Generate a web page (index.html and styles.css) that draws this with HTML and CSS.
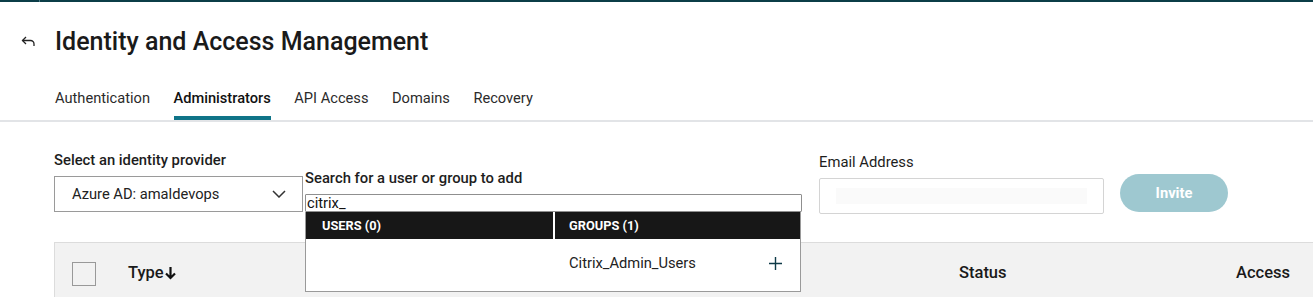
FILE: index.html
```html
<!DOCTYPE html>
<html lang="en">

<head>
    <meta charset="UTF-8">
    <meta name="viewport" content="width=device-width, initial-scale=1.0">

    <title>Identity and Access Management</title>
    <link rel="stylesheet" href="styles.css">
</head>

<body>
    <div class="topbar"></div>

    <div class="page-header">
        <svg class="back-icon" width="16" height="12" viewBox="0 0 16 12">
            <path d="M5 1 L1.5 4.5 L5 8" fill="none" stroke="#222" stroke-width="1.3" />
            <path d="M1.5 4.5 H9.5 A3.5 3.5 0 0 1 13 8 V10" fill="none" stroke="#222" stroke-width="1.3" />
        </svg>
        <h1>Identity and Access Management</h1>
    </div>

    <nav class="tabs">
        <a class="tab">Authentication</a>
        <a class="tab active">Administrators</a>
        <a class="tab">API Access</a>
        <a class="tab">Domains</a>
        <a class="tab">Recovery</a>
    </nav>

    <div class="form-row">
        <div class="field provider">
            <label>Select an identity provider</label>
            <div class="select-box">
                <span>Azure AD: amaldevops</span>
                <svg width="14" height="8" viewBox="0 0 14 8">
                    <path d="M1 1 L7 7 L13 1" fill="none" stroke="#333" stroke-width="1.5" />
                </svg>
            </div>
        </div>

        <div class="field search">
            <label>Search for a user or group to add</label>
            <div class="search-wrap">
                <input type="text" class="search-input" value="citrix_">
                <div class="results">
                    <div class="results-head">
                        <div class="col-users">USERS (0)</div>
                        <div class="col-groups">GROUPS (1)</div>
                    </div>
                    <div class="results-body">
                        <div class="col-users"></div>
                        <div class="col-groups group-item">
                            <span>Citrix_Admin_Users</span>
                            <svg width="13" height="13" viewBox="0 0 13 13">
                                <path d="M6.5 0 V13 M0 6.5 H13" stroke="#0e3a47" stroke-width="1.4" />
                            </svg>
                        </div>
                    </div>
                </div>
            </div>
        </div>

        <div class="field email">
            <label>Email Address</label>
            <div class="email-box">
                <div class="autofill"></div>
            </div>
        </div>

        <button class="invite" type="button" disabled>Invite</button>
    </div>

    <div class="table-head">
        <div class="checkbox"></div>
        <div class="th type">
            Type
            <svg class="sort" width="11" height="13" viewBox="0 0 11 13">
                <path d="M5.5 0 V11 M1 6.5 L5.5 11 L10 6.5" fill="none" stroke="#111" stroke-width="2.2" />
            </svg>
        </div>
        <div class="th">Status</div>
        <div class="th">Access</div>
    </div>
</body>

</html>
```

FILE: styles.css
```css
body {
    margin: 0;
    font-family: 'Roboto', 'Liberation Sans', sans-serif;
    color: #1f1f1f;
    background-color: #fff;
    overflow: hidden;
}

.topbar {
    height: 2px;
    background-color: #0b3d47;
    border-left: 39px solid #0b3d47;
    box-shadow: inset 1px 0 0 #4b7a85;
}

.page-header {
    display: flex;
    align-items: center;
    padding-left: 21px;
    margin-top: 25px;
    height: 28px;
}

.back-icon {
    margin-right: 18px;
    margin-top: 2px;
}

h1 {
    margin: 0;
    font-size: 25px;
    font-weight: 500;
    color: #1a1a1a;
}

.tabs {
    display: flex;
    gap: 23.5px;
    padding-left: 55px;
    margin-top: 33px;
    border-bottom: 2px solid #e2e4e7;
}

.tab {
    font-size: 14.65px;
    color: #2b2b2b;
    padding-bottom: 8px;
    border-bottom: 4px solid transparent;
    line-height: 20px;
}

.tab.active {
    font-weight: 500;
    color: #111;
    border-bottom-color: #0f7488;
}

.form-row {
    display: flex;
    align-items: flex-start;
    padding-left: 54px;
    padding-top: 28px;
    height: 92px;
}

.field label {
    display: block;
    font-size: 14.8px;
    line-height: 20px;
    font-weight: 500;
    color: #1d1d1d;
    margin-bottom: 6px;
}

.provider {
    width: 249px;
}

.select-box {
    display: flex;
    align-items: center;
    justify-content: space-between;
    height: 34px;
    border: 1px solid #9a9a9a;
    padding: 0 16px 0 17px;
    font-size: 14.7px;
    color: #222;
}

.search {
    margin-left: 2px;
    margin-top: 18px;
    width: 497px;
}

.search-wrap {
    position: relative;
}

.search-input {
    display: block;
    box-sizing: border-box;
    width: 497px;
    height: 18px;
    margin: 0;
    padding: 0 1px;
    border: 1px solid #8f8f8f;
    border-radius: 1px;
    font-family: 'Roboto', 'Liberation Sans', sans-serif;
    font-size: 14.7px;
    color: #111;
    outline: none;
}

.results {
    position: absolute;
    top: 18px;
    left: 0;
    width: 496px;
    background-color: #fff;
    border: 1px solid #9a9a9a;
    border-top: none;
    box-sizing: border-box;
    z-index: 2;
}

.results-head,
.results-body {
    display: grid;
    grid-template-columns: 247px 1fr;
    column-gap: 2px;
}

.results-head {
    background-color: #fff;
}

.results-head div {
    background-color: #171717;
    color: #fff;
    font-size: 12.8px;
    font-weight: 700;
    height: 27px;
    line-height: 27px;
}

.results-head .col-users {
    padding-left: 16px;
}

.results-head .col-groups {
    padding-left: 14px;
}

.results-body {
    height: 52px;
}

.group-item {
    display: flex;
    align-items: center;
    justify-content: space-between;
    padding: 0 18px 4px 14px;
    font-size: 14.7px;
    color: #222;
}

.email {
    margin-left: 17px;
    margin-top: 2px;
    width: 285px;
}

.email label {
    font-weight: 400;
}

.email-box {
    box-sizing: border-box;
    height: 36px;
    border: 1px solid #d4d4d4;
    border-radius: 2px;
    padding: 9px 16px;
}

.autofill {
    height: 16px;
    background-color: #fafafa;
}

.invite {
    margin-left: 16px;
    margin-top: 24px;
    width: 108px;
    height: 38px;
    border: none;
    border-radius: 19px;
    background-color: #9ec8d0;
    color: #fff;
    font-family: 'Roboto', 'Liberation Sans', sans-serif;
    font-size: 14.7px;
    font-weight: 700;
}

.table-head {
    display: grid;
    grid-template-columns: 56px 831px 277px 1fr;
    align-items: center;
    margin-left: 54px;
    height: 62px;
    padding-left: 17px;
    background-color: #f2f2f2;
    border-top: 1px solid #dcdcdc;
    border-left: 1px solid #dcdcdc;
}

.checkbox {
    width: 22px;
    height: 22px;
    border: 1px solid #999;
}

.th {
    font-size: 16.5px;
    font-weight: 500;
    color: #1a1a1a;
    margin-bottom: 3px;
}

.type {
    display: flex;
    align-items: center;
    gap: 1px;
}

.sort {
    margin-top: 2px;
}
```
